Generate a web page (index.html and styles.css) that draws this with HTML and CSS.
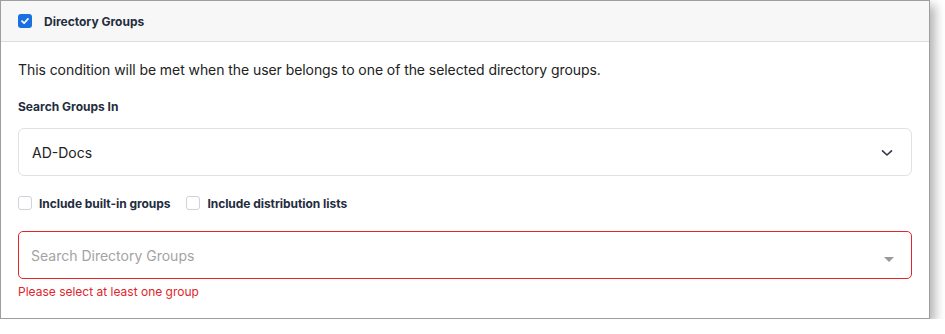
FILE: index.html
```html
<!DOCTYPE html>
<html>
<head>
<meta charset="utf-8">
<link rel="stylesheet" href="styles.css">
</head>
<body>
<div class="card">
  <div class="card-header">
    <span class="cb cb-checked">
      <svg width="10" height="10" viewBox="0 0 10 10"><path d="M2 5.2 L4.1 7.2 L8 2.9" fill="none" stroke="#fff" stroke-width="1.7" stroke-linecap="round" stroke-linejoin="round"/></svg>
    </span>
    <span class="title">Directory Groups</span>
  </div>
  <div class="card-body">
    <p class="desc">This condition will be met when the user belongs to one of the selected directory groups.</p>
    <div class="label">Search Groups In</div>
    <div class="select">
      <span>AD-Docs</span>
      <svg class="chev" width="12" height="8" viewBox="0 0 12 8"><path d="M1.5 1.8 L6 6 L10.5 1.8" fill="none" stroke="#333a45" stroke-width="1.6" stroke-linecap="round" stroke-linejoin="round"/></svg>
    </div>
    <div class="options">
      <label class="opt"><span class="cb"></span>Include built-in groups</label>
      <label class="opt"><span class="cb"></span>Include distribution lists</label>
    </div>
    <div class="search">
      <span class="placeholder">Search Directory Groups</span>
      <span class="caret"></span>
    </div>
    <div class="error">Please select at least one group</div>
  </div>
</div>
</body>
</html>
```
FILE: styles.css
```css
html, body { margin: 0; padding: 0; background: #fff; }
body { font-family: Inter, "Noto Sans", sans-serif; color: #212529; }
.card {
  width: 928px;
  height: 317px;
  border: 1px solid #9e9e9e;
  box-shadow: 5px 5px 10px rgba(0,0,0,0.3);
  background: #fff;
  box-sizing: content-box;
}
.card-header {
  height: 40px;
  background: #f7f7f7;
  border-bottom: 1px solid #dcdcdc;
  display: flex;
  align-items: center;
  padding-left: 17px;
}
.cb {
  width: 12px; height: 12px;
  border: 1px solid #cfd3d8;
  border-radius: 3px;
  background: #fff;
  display: inline-flex;
  align-items: center;
  justify-content: center;
  flex: none;
}
.cb-checked {
  width: 14px; height: 14px;
  border: none;
  background: #1a70e0;
}
.title {
  margin-left: 12px;
  font-size: 12px;
  font-weight: 700;
  color: #1f2d3d;
}
.card-body { padding: 0 17px; }
.desc {
  margin: 0;
  padding-top: 18px;
  font-size: 14px;
  line-height: 20px;
  letter-spacing: -0.07px;
  color: #222;
}
.label {
  margin-top: 19px;
  font-size: 12px;
  font-weight: 700;
  line-height: 16px;
  color: #1f2d3d;
}
.select {
  margin-top: 13px;
  height: 46px;
  border: 1px solid #e2e2e2;
  border-radius: 6px;
  display: flex;
  align-items: center;
  justify-content: space-between;
  padding: 0 18px 0 13px;
  font-size: 14px;
  color: #222;
}
.chev { margin-top: 1px; }
.options {
  margin-top: 19px;
  display: flex;
  gap: 16px;
  height: 16px;
  align-items: center;
}
.opt {
  display: flex;
  align-items: center;
  gap: 7px;
  font-size: 12px;
  font-weight: 700;
  letter-spacing: -0.05px;
  color: #1f2d3d;
}
.search {
  margin-top: 20px;
  height: 46px;
  border: 1px solid #e8242b;
  border-radius: 5px;
  display: flex;
  align-items: center;
  justify-content: space-between;
  padding: 0 17px 0 12px;
  font-size: 14px;
}
.placeholder { color: #a3a3a3; }
.caret {
  width: 0; height: 0;
  border-left: 5px solid transparent;
  border-right: 5px solid transparent;
  border-top: 5px solid #999;
  margin-top: 8px;
}
.error {
  margin-top: 5px;
  font-size: 12px;
  line-height: 16px;
  color: #e3242b;
}
```
